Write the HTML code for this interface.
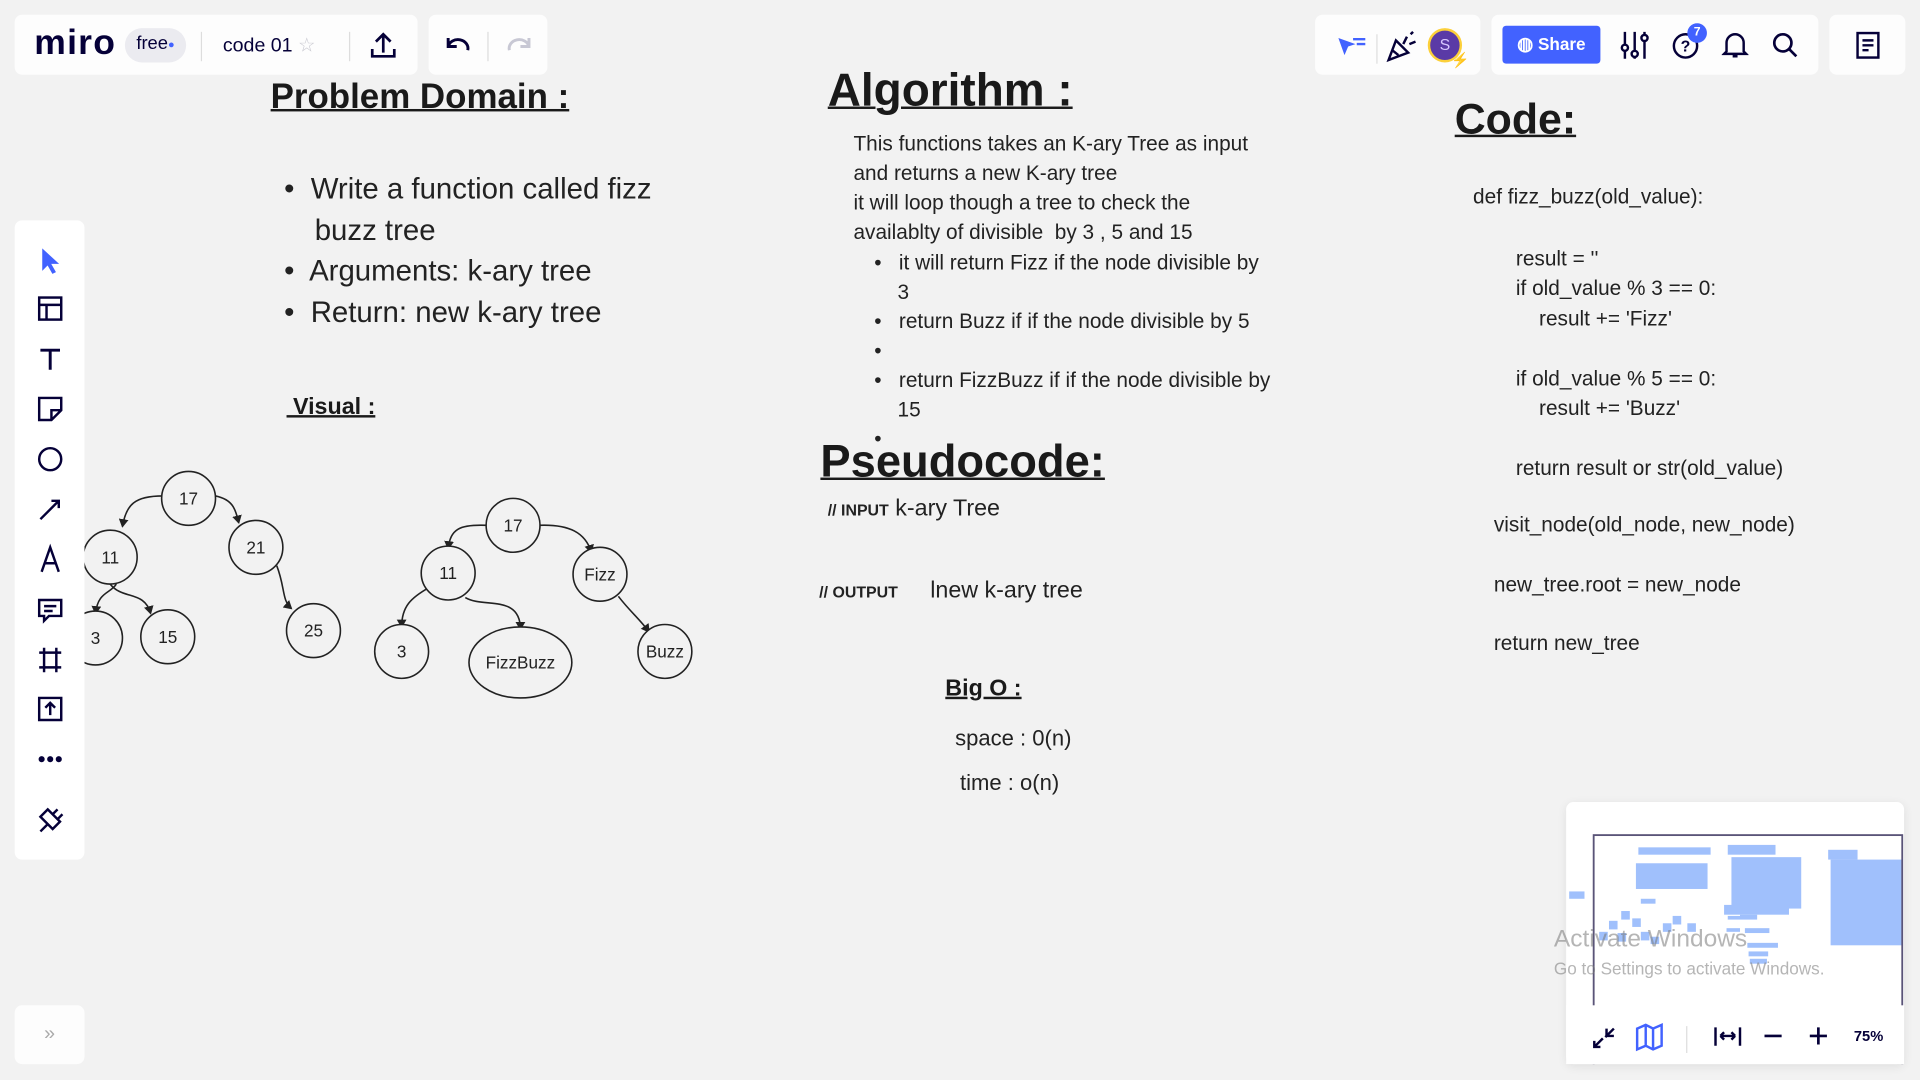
<!DOCTYPE html>
<html><head><meta charset="utf-8"><style>
html,body{margin:0;padding:0;width:1920px;height:1080px;overflow:hidden;background:#f2f2f2;font-family:"Liberation Sans",sans-serif;color:#1a1a1a}
#s{position:absolute;left:0;top:0;width:1568px;height:882px;transform:scale(1.22449);transform-origin:0 0}
.a{position:absolute;white-space:nowrap}
.p{position:absolute;background:#fdfdfd;border-radius:6px}
h{position:absolute;font-weight:bold;text-decoration:underline;white-space:nowrap;text-decoration-thickness:2px}
.t{font-size:17px;line-height:24px;color:#222}
.code{font-size:17px;color:#222}
</style></head><body><div id="s">
<svg class="a" style="left:0;top:0" width="700" height="600" fill="none" stroke="#222" stroke-width="1.3">
<defs><marker id="m" markerWidth="8" markerHeight="8" refX="6" refY="4" orient="auto" markerUnits="userSpaceOnUse"><path d="M0 0L7 4L0 8z" fill="#222" stroke="none"/></marker></defs>
<g marker-end="url(#m)">
<path d="M133 405 C110 405 103 412 100 430"/><path d="M176 405 C190 408 192 415 195 427"/>
<path d="M95 477 C90 485 80 483 78 501"/><path d="M90 477 C100 490 118 482 123 501"/>
<path d="M226 462 C233 480 230 490 238 497"/>
<path d="M398 429 C375 428 368 432 366 448"/><path d="M440 429 C465 428 478 435 483 451"/>
<path d="M350 480 C336 488 328 495 328 512"/><path d="M380 488 C395 497 425 485 425 514"/>
<path d="M505 487 C515 500 522 505 530 516"/>
</g>
<g fill="#f2f2f2">
<circle cx="154" cy="407" r="22"/><circle cx="90" cy="455" r="22"/><circle cx="209" cy="447" r="22"/>
<circle cx="78" cy="521" r="22"/><circle cx="137" cy="520" r="22"/><circle cx="256" cy="515" r="22"/>
<circle cx="419" cy="429" r="22"/><circle cx="366" cy="468" r="22"/><circle cx="490" cy="469" r="22"/>
<circle cx="328" cy="532" r="22"/><ellipse cx="425" cy="541" rx="42" ry="29"/><circle cx="543" cy="532" r="22"/>
</g>
<g font-family="Liberation Sans" font-size="14" fill="#222" stroke="none" text-anchor="middle">
<text x="154" y="412">17</text><text x="90" y="460">11</text><text x="209" y="452">21</text>
<text x="78" y="526">3</text><text x="137" y="525">15</text><text x="256" y="520">25</text>
<text x="419" y="434">17</text><text x="366" y="473">11</text><text x="490" y="474">Fizz</text>
<text x="328" y="537">3</text><text x="425" y="546">FizzBuzz</text><text x="543" y="537">Buzz</text>
</g></svg>

<h style="left:221px;top:63px;font-size:28.5px">Problem Domain :</h>
<div class="a" style="left:232px;top:138px;font-size:24px;line-height:33.5px;color:#222">
<div>•&nbsp; Write a function called fizz</div>
<div style="padding-left:25px">buzz tree</div>
<div>•&nbsp; Arguments: k-ary tree</div>
<div>•&nbsp; Return: new k-ary tree</div></div>
<h style="left:234px;top:322px;font-size:19px">&nbsp;Visual :</h>

<h style="left:676px;top:52px;font-size:37.5px">Algorithm :</h>
<div class="a t" style="left:697px;top:106px">This functions takes an K-ary Tree as input<br>and returns a new K-ary tree<br>it will loop though a tree to check the<br>availablty of divisible&nbsp; by 3 , 5 and 15</div>
<div class="a t" style="left:714px;top:203px">
<div>•&nbsp;&nbsp; it will return Fizz if the node divisible by</div>
<div style="padding-left:19px">3</div>
<div>•&nbsp;&nbsp; return Buzz if if the node divisible by 5</div>
<div>•</div>
<div>•&nbsp;&nbsp; return FizzBuzz if if the node divisible by</div>
<div style="padding-left:19px">15</div>
<div>•</div></div>
<h style="left:670px;top:356px;font-size:37px">Pseudocode:</h>
<div class="a" style="left:676px;top:405px;font-size:19px;color:#222"><b style="font-size:13px">// INPUT</b> k-ary Tree</div>
<div class="a" style="left:669px;top:472px;font-size:19px;color:#222"><b style="font-size:13px">// OUTPUT</b>&nbsp;&nbsp;&nbsp;&nbsp; lnew k-ary tree</div>
<h style="left:772px;top:552px;font-size:19px">Big O :</h>
<div class="a" style="left:780px;top:593px;font-size:18px;color:#222">space : 0(n)</div>
<div class="a" style="left:784px;top:629px;font-size:18px;color:#222">time : o(n)</div>

<h style="left:1188px;top:78px;font-size:35px">Code:</h>
<div class="a code" style="left:1203px;top:151px">def fizz_buzz(old_value):</div>
<div class="a code" style="left:1238px;top:200px;line-height:24.4px">result = ''<br>if old_value % 3 == 0:<br>&nbsp;&nbsp;&nbsp;&nbsp;result += 'Fizz'<br><br>if old_value % 5 == 0:<br>&nbsp;&nbsp;&nbsp;&nbsp;result += 'Buzz'<br><br>return result or str(old_value)</div>
<div class="a code" style="left:1220px;top:405px;line-height:48.7px">visit_node(old_node, new_node)<br>new_tree.root = new_node<br>return new_tree</div>

<div class="p" style="left:12px;top:12px;width:329px;height:49px"></div>
<div class="a" style="left:28px;top:19px;font-size:29px;font-weight:bold;color:#050038;letter-spacing:1px">miro</div>
<div class="a" style="left:102px;top:23px;width:50px;height:28px;border-radius:14px;background:#ebebf0;font-size:15px;line-height:26px;text-align:center;color:#050038">free<span style="color:#4262ff;font-size:9px;vertical-align:top">●</span></div>
<div class="a" style="left:164px;top:26px;width:1px;height:24px;background:#ddd"></div>
<div class="a" style="left:182px;top:27px;font-size:16px;color:#050038">code 01 <span style="color:#c8c8d0">☆</span></div>
<div class="a" style="left:285px;top:26px;width:1px;height:24px;background:#ddd"></div>
<svg class="a" style="left:302px;top:25px" width="22" height="24" fill="none" stroke="#050038" stroke-width="2.2"><path d="M11 18V3M5 9l6-6 6 6M2 15v6h18v-6"/></svg>
<div class="p" style="left:350px;top:12px;width:97px;height:49px"></div>
<svg class="a" style="left:363px;top:27px" width="24" height="20" fill="none" stroke="#050038" stroke-width="2.4"><path d="M3 4v7h7M3 11a8 7 0 0 1 16 3"/></svg>
<div class="a" style="left:398px;top:26px;width:1px;height:24px;background:#ddd"></div>
<svg class="a" style="left:412px;top:27px" width="24" height="20" fill="none" stroke="#c8c8d4" stroke-width="2.4"><path d="M20 4v7h-7M20 11a8 7 0 0 0-16 3"/></svg>

<div class="p" style="left:1074px;top:12px;width:135px;height:49px"></div>
<svg class="a" style="left:1090px;top:25px" width="28" height="26"><path d="M3 6l14 5-6 2-3 7z" fill="#4262ff"/><path d="M15 7h10M18 11h7" stroke="#4262ff" stroke-width="2"/></svg>
<div class="a" style="left:1124px;top:28px;width:1px;height:24px;background:#ddd"></div>
<svg class="a" style="left:1130px;top:24px" width="30" height="28" fill="none" stroke="#050038" stroke-width="2"><path d="M4 25l6-16 10 10z M7 17l5 4M19 6l-3 6M21 12l5-2M22 4l2-2"/></svg>
<div class="a" style="left:1166px;top:23px;width:24px;height:24px;border-radius:50%;background:#5a3aa6;border:2.5px solid #fcd03a;color:#d8c8ff;font-size:13px;line-height:24px;text-align:center">S</div>
<div class="a" style="left:1185px;top:42px;color:#fcd03a;font-size:12px">⚡</div>

<div class="p" style="left:1218px;top:12px;width:267px;height:49px"></div>
<div class="a" style="left:1227px;top:21px;width:80px;height:31px;border-radius:3px;background:#4262ff;color:#fff;font-weight:bold;font-size:14px;line-height:31px"><span style="margin-left:12px;font-size:15px">◍</span> Share</div>
<svg class="a" style="left:1323px;top:24px" width="24" height="26" fill="none" stroke="#050038" stroke-width="2"><path d="M4 2v22M12 2v22M20 2v22"/><circle cx="4" cy="15" r="2.5" fill="#fff"/><circle cx="12" cy="20" r="2.5" fill="#fff"/><circle cx="20" cy="7" r="2.5" fill="#fff"/></svg>
<div class="a" style="left:1366px;top:27px;width:17px;height:17px;border:2px solid #050038;border-radius:50%;font-size:13px;font-weight:bold;text-align:center;line-height:17px;color:#050038">?</div>
<div class="a" style="left:1378px;top:19px;width:16px;height:16px;border-radius:50%;background:#4262ff;color:#fff;font-size:10px;font-weight:bold;text-align:center;line-height:16px">7</div>
<svg class="a" style="left:1406px;top:25px" width="22" height="24" fill="none" stroke="#050038" stroke-width="2"><path d="M4 17V10a7 7 0 0 1 14 0v7l2 2H2zM9 21h4"/></svg>
<svg class="a" style="left:1447px;top:25px" width="22" height="24" fill="none" stroke="#050038" stroke-width="2.2"><circle cx="9" cy="10" r="7"/><path d="M14 15l6 6"/></svg>
<div class="p" style="left:1494px;top:12px;width:62px;height:49px"></div>
<svg class="a" style="left:1515px;top:25px" width="22" height="24" fill="none" stroke="#050038" stroke-width="2"><rect x="2" y="2" width="17" height="20"/><path d="M6 8h9M6 12h9M6 16h5"/></svg>

<div class="p" style="left:12px;top:180px;width:57px;height:522px;background:#fff"></div>
<svg class="a" style="left:12px;top:180px" width="57" height="522" fill="none" stroke="#050038" stroke-width="2">
<path d="M23 24l0 16 4-4 4 7 2-1-4-7 6 0z" fill="#4262ff" stroke="#4262ff" stroke-width="1"/>
<rect x="20" y="63" width="18" height="18"/><path d="M20 69h18M26 69v12"/>
<path d="M21 106h16M29 106v16" stroke-width="2.4"/>
<path d="M20 145h18v10l-8 8h-10z M30 163v-8h8"/>
<circle cx="29" cy="195" r="9"/>
<path d="M21 244l14-14M30 229h6v6"/>
<path d="M22 287l7-20 7 20M25 280h8"/>
<path d="M20 310h18v13h-10l-4 4v-4h-4z M24 315h10M24 319h7"/>
<path d="M24 349v20M34 349v20M20 353h18M20 365h18"/>
<path d="M20 390h18v18h-18zM29 404v-10M25 398l4-4 4 4"/>
<circle cx="22" cy="440" r="1.5" fill="#050038"/><circle cx="29" cy="440" r="1.5" fill="#050038"/><circle cx="36" cy="440" r="1.5" fill="#050038"/>
<path d="M21 499l6-6M27 481l10 10-6 6-10-10zM31 485l4-4M35 489l4-4"/>
</svg>
<div class="p" style="left:12px;top:821px;width:57px;height:48px;color:#aaa;font-size:16px;text-align:center;line-height:48px">»</div>

<div class="p" style="left:1279px;top:655px;width:276px;height:214px;background:#fff;box-shadow:0 2px 8px rgba(0,0,0,.08)"></div>
<svg class="a" style="left:1279px;top:655px" width="276" height="214">
<g fill="#a0c0fc"><rect x="2.5" y="73" width="12.5" height="6"/><rect x="59" y="37" width="59" height="6"/><rect x="57" y="50" width="58.5" height="21"/><rect x="61" y="79" width="12" height="4"/>
<rect x="132" y="35" width="39" height="8"/><rect x="135" y="45" width="57" height="42"/><rect x="129" y="84" width="53" height="8"/><rect x="132" y="93" width="10" height="3"/><rect x="142" y="92" width="14" height="4"/><rect x="131" y="103" width="11" height="3"/><rect x="146" y="103" width="20" height="4"/><rect x="148" y="115" width="25" height="4"/><rect x="149" y="122" width="16" height="4"/><rect x="150" y="128" width="14" height="4"/>
<rect x="214" y="39" width="24" height="8"/><rect x="216" y="47" width="58" height="70"/>
<rect x="35" y="97" width="7" height="7"/><rect x="45" y="89" width="7" height="7"/><rect x="54" y="95" width="7" height="7"/><rect x="27" y="106" width="7" height="7"/><rect x="42" y="107" width="7" height="7"/><rect x="61" y="106" width="7" height="7"/><rect x="79" y="99" width="7" height="7"/><rect x="87" y="93" width="7" height="7"/><rect x="99" y="99" width="7" height="7"/><rect x="69" y="110" width="7" height="6"/></g>
<rect x="22.5" y="27" width="252" height="190" fill="none" stroke="#5a5478" stroke-width="1.5"/>
<rect x="0" y="166" width="276" height="48" fill="#fff"/>
<path d="M98.5 183v22" stroke="#ddd"/>
<path d="M23 200l7-7M23 195v5h5M39 185l-7 7M39 191h-6v-6" stroke="#050038" stroke-width="2" fill="none"/>
<path d="M58 185l7-3 6 3 7-3v17l-7 3-6-3-7 3z M65 182v17M71 185v17" stroke="#4262ff" stroke-width="2" fill="none"/>
<path d="M122 184v15M142 184v15M126 191h12M126 191l3-3M126 191l3 3M138 191l-3-3M138 191l-3 3" stroke="#050038" stroke-width="2" fill="none"/>
<path d="M162 191h14M199 191h14M206 184v14" stroke="#050038" stroke-width="2.2"/>
<text x="235" y="195" font-family="Liberation Sans" font-size="12" font-weight="bold" fill="#050038">75%</text>
</svg>
<div class="a" style="left:1269px;top:756px;font-size:20px;color:rgba(120,120,120,.55)">Activate Windows</div>
<div class="a" style="left:1269px;top:783px;font-size:14px;color:rgba(120,120,120,.55)">Go to Settings to activate Windows.</div>
</div></body></html>
